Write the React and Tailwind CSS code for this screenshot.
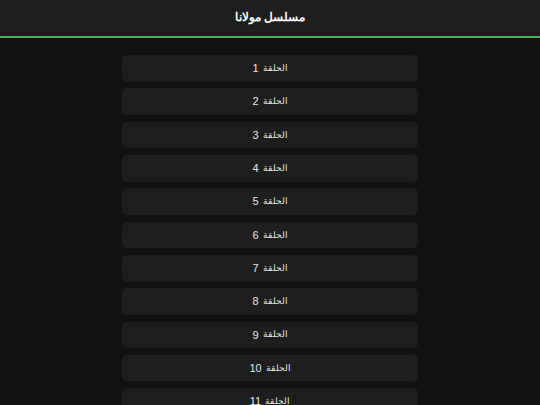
const episodes = Array.from({ length: 12 }, (_, i) => i + 1);

export default function App() {
  return (
    <div
      dir="rtl"
      className="min-h-screen bg-[#121212] text-white"
      style={{ fontFamily: "'Liberation Sans', Arial, sans-serif" }}
    >
      {/* Header */}
      <header className="h-[38px] bg-[#1e1e1e] border-b-2 border-[#4caf50] flex items-center justify-center">
        <h1 className="text-[11.5px] font-bold leading-none">مسلسل مولانا</h1>
      </header>

      {/* Episode list */}
      <div className="w-[296px] mx-auto pt-[17px] flex flex-col gap-[6.67px]">
        {episodes.map((n) => (
          <div
            key={n}
            className="h-[26.67px] bg-[#1e1e1e] rounded-[5px] flex items-center justify-center gap-[4px] text-[11px] text-[#e6e6e6] cursor-pointer"
          >
            <span className="text-[8.5px]">الحلقة</span>
            <span>{n}</span>
          </div>
        ))}
      </div>
    </div>
  );
}
